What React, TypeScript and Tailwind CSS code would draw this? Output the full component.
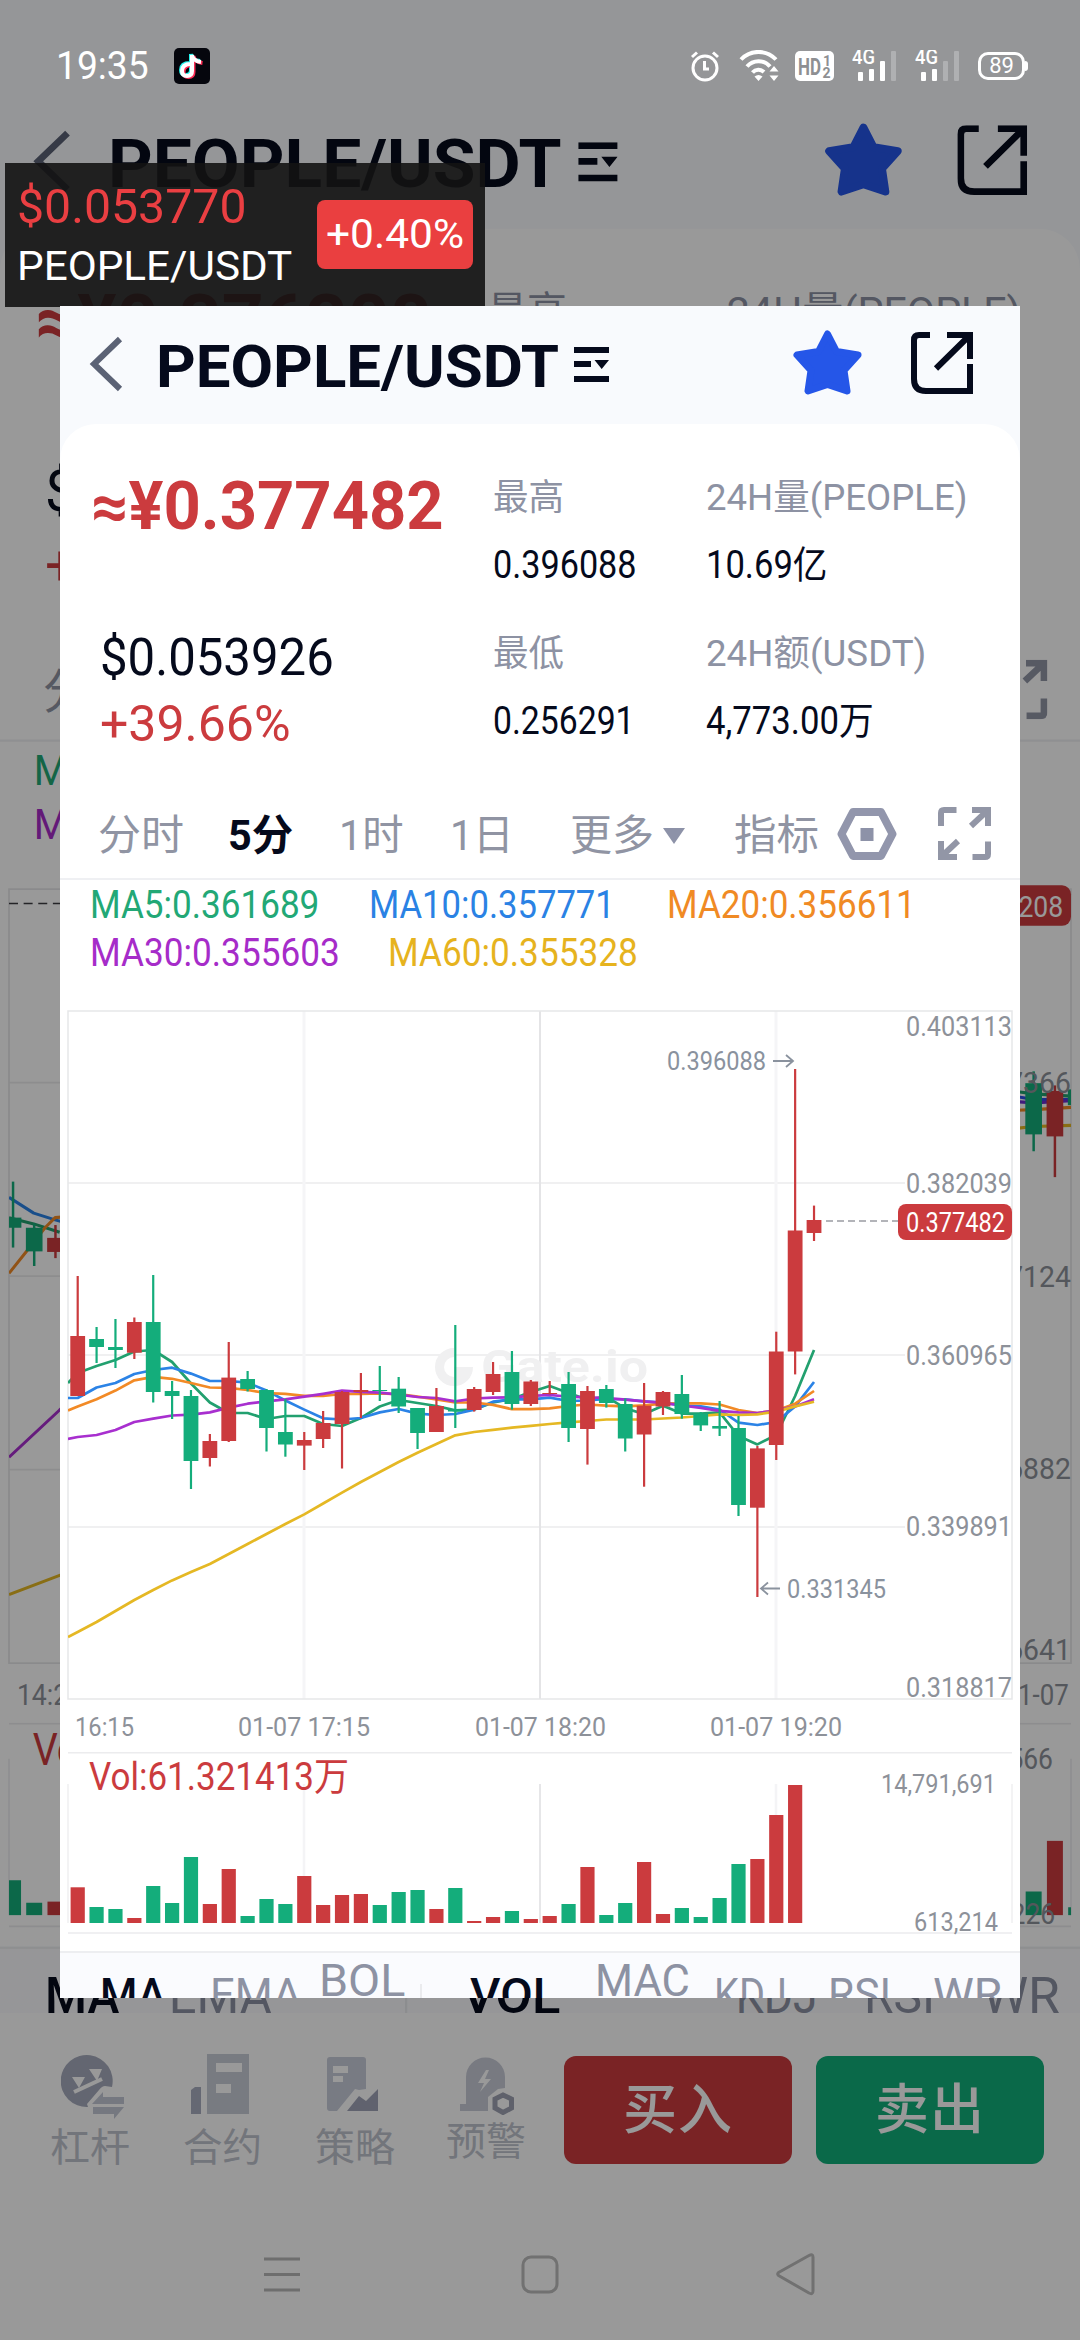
import { useLayoutEffect, useRef, useState } from "react";
import type { ReactNode } from "react";

const RED = "#cb3b3e";
const GREEN = "#14ad7b";
const FONT = "Roboto, 'Noto Sans CJK SC', sans-serif";

/** One line of text, condensed or widened so that it fills `w` pixels. */
function Fit({ w, className = "", children }: { w: number; className?: string; children: ReactNode }) {
  const ref = useRef<HTMLSpanElement>(null);
  const [k, setK] = useState(1);
  useLayoutEffect(() => {
    if (ref.current) setK(w / ref.current.offsetWidth);
  }, [w]);
  return (
    <span className={`block shrink-0 whitespace-nowrap ${className}`} style={{ width: w }}>
      <span ref={ref} className="inline-block origin-left" style={{ transform: `scaleX(${k})` }}>
        {children}
      </span>
    </span>
  );
}

/** Chart label: `cy` is the centre of the digits. */
function Label({ x, cy, w, size = 27, fill = "#8d9199", children }: { x: number; cy: number; w: number; size?: number; fill?: string; children: string }) {
  return (
    <text x={x} y={cy + size * 0.356} fontSize={size} fill={fill} fontFamily={FONT} textLength={w} lengthAdjust="spacingAndGlyphs">
      {children}
    </text>
  );
}

// colour, high, body top, body bottom, low
type Candle = [0 | 1, number, number, number, number];
const R = 0;
const G = 1;

interface ScreenData {
  price: string;
  usd: string;
  pct: string;
  candles: { x: number; c: Candle }[];
  lines: { color: string; pts: string }[];
  axis: string[];
  times: { t: string; x: number; w: number }[];
  vol: { x: number; c: 0 | 1; h: number }[];
  volText: string;
  volMax: string;
  volMin: string;
  last: { t: string; y: number; from: number; badge: number; dash: string };
  marks: boolean;
}

const cx = (i: number) => 17.7 + i * 18.88;

const candles: Candle[] = [
  [R, 265, 325, 385, 385], [G, 316, 328, 336, 352], [G, 308, 336, 339, 357], [R, 306.5, 311, 341.7, 348],
  [G, 264, 311, 381, 391.5], [G, 370, 380, 385, 408], [G, 379, 385, 450, 478], [R, 423, 430, 447, 455.5],
  [R, 331, 366.6, 430, 431], [G, 360, 368, 378, 380.5], [G, 378, 379, 417, 440.5], [G, 388, 421, 433.5, 445.7],
  [R, 421, 429, 434.6, 459], [R, 400, 412, 428, 437], [R, 380, 381, 413, 457.5], [R, 362, 379, 381, 407],
  [G, 355, 379, 380, 390], [G, 366, 377.7, 395.5, 402], [G, 397, 397, 422, 438], [R, 377, 395, 421, 421],
  [G, 314, 399, 400.5, 417], [R, 376, 378, 399, 400.6], [R, 351, 363, 381, 384], [G, 340, 361, 393, 398.6],
  [R, 369, 370.5, 393, 395], [R, 370, 382, 383, 383.5], [G, 361, 373, 417, 431], [R, 375, 380, 418, 453.6],
  [G, 374, 378, 392, 396.6], [G, 387.5, 393, 427.5, 440.5], [R, 372, 394.7, 423.5, 475.7], [R, 380, 381, 395.5, 404],
  [G, 364, 383, 403, 407.7], [G, 401, 402.6, 414.4, 420], [G, 390, 415, 417.6, 425], [G, 405, 417, 494, 505],
  [R, 435, 437.4, 496.7, 586], [R, 320.7, 340.5, 434, 449], [R, 58, 219.5, 340.5, 363.4], [R, 194.6, 209, 222, 230],
];

const series = (edge: number, ys: number[]) => [`8,${edge}`, ...ys.map((y, i) => `${cx(i)},${y}`)].join(" ");

const ma5 = [362, 355, 349, 340.5, 339, 351, 372.5, 391.5, 402, 402, 408, 405, 405, 413, 415, 407, 395.5, 389, 392, 395, 399.4, 398.6, 391.5, 388, 381, 375, 382, 388.7, 385.6, 397.4, 403, 394.7, 402.6, 402.6, 401.4, 425, 433.4, 424, 385, 339];
const ma10 = [387, 376.5, 372, 363, 359, 356.7, 362.6, 370, 370, 371.7, 379.6, 389.5, 398.6, 407.3, 408.5, 407, 401.4, 398, 402.6, 404, 403, 398.6, 390.7, 388.3, 388.3, 386.7, 390, 389.5, 388, 388.3, 390.3, 391.5, 394.7, 395.4, 398.6, 411.7, 414, 411, 395.4, 371];
const ma20 = [395.4, 388.3, 379.6, 369.3, 365.8, 367.8, 372, 376.5, 376.9, 379, 382, 382.8, 384.8, 384.8, 383, 382.8, 382.4, 383.2, 385.6, 388.3, 391.5, 391.5, 393.9, 398.2, 398.2, 397.4, 395, 393.5, 394.7, 395.4, 394.3, 392.7, 392.3, 392.3, 393.5, 399, 402, 399.4, 392.7, 380];
const ma30 = [426, 424, 419, 411, 407.7, 404.5, 403.7, 401.4, 396.6, 392.7, 390.3, 388.3, 385.6, 382.8, 379.6, 380.8, 381.6, 383.6, 386, 387, 390.3, 387.5, 386.7, 386.3, 384.8, 384, 385.6, 386.3, 387, 388.7, 390.3, 391.9, 394.3, 397, 399.8, 401.4, 402, 399.4, 395.4, 388.3];
const ma60 = [621, 611, 600, 589, 579, 569.4, 561, 553, 543, 533, 523, 513, 503.4, 492.5, 481.6, 471, 461, 451, 441.7, 433, 424.3, 421, 418.8, 416.7, 414.8, 413, 411.3, 410, 408.5, 408.5, 408.5, 407.5, 406.5, 405, 403.4, 404, 403.4, 400.6, 395.4, 390.7];
const volumes = [35.7, 16, 14, 5, 37, 20, 66, 19, 54, 7, 24, 19, 47, 18, 28, 29, 18, 31, 33, 14, 35, 2, 6, 12, 4, 7, 19, 56, 8, 20, 61, 9, 15, 6, 25, 59, 64, 108, 138];

const front: ScreenData = {
  price: "≈¥0.377482",
  usd: "$0.053926",
  pct: "+39.66%",
  candles: candles.map((c, i) => ({ x: cx(i), c })),
  lines: [
    { color: "#22a06f", pts: series(372, ma5) },
    { color: "#2b83e6", pts: series(387, ma10) },
    { color: "#f28a26", pts: series(399.4, ma20) },
    { color: "#a82fcf", pts: series(428, ma30) },
    { color: "#e5b824", pts: series(626, ma60) },
  ],
  axis: ["0.403113", "0.382039", "0.360965", "0.339891", "0.318817"],
  times: [
    { t: "16:15", x: 15, w: 59 },
    { t: "01-07 17:15", x: 178, w: 132 },
    { t: "01-07 18:20", x: 415, w: 131 },
    { t: "01-07 19:20", x: 650, w: 132 },
  ],
  vol: volumes.map((h, i) => ({ x: cx(i), c: candles[i][0], h })),
  volText: "Vol:61.321413万",
  volMax: "14,791,691",
  volMin: "613,214",
  last: { t: "0.377482", y: 210, from: 766, badge: 193, dash: "7 4" },
  marks: true,
};

const back: ScreenData = {
  price: "≈¥0.376208",
  usd: "$0.053744",
  pct: "+39.19%",
  candles: [
    { x: 11.6, c: [G, 260, 292, 301, 318.6] },
    { x: 30.4, c: [G, 297, 301, 322, 335] },
    { x: 49.3, c: [R, 298.6, 310, 322.5, 328] },
    { x: 918.8, c: [G, 162, 172.5, 218, 233] },
    { x: 937.7, c: [R, 174.5, 179.4, 219.8, 256] },
    { x: 956.6, c: [G, 178, 178, 192, 192] },
  ],
  lines: [
    { color: "#22a06f", pts: "8,292 30,297.6 53,305" },
    { color: "#2b83e6", pts: "8,274 30,288 49,294 60,297" },
    { color: "#f28a26", pts: "8,341.5 24,321.5 40,301 49,292 60,291" },
    { color: "#a82fcf", pts: "8,505 53,463 70,448" },
    { color: "#e5b824", pts: "8,627 53,610 80,600" },
    { color: "#22a06f", pts: "890,178 919,182 952,184" },
    { color: "#2b4fe6", pts: "890,182 919,187 952,187" },
    { color: "#6b2fcf", pts: "890,188 919,190 952,188" },
    { color: "#f28a26", pts: "890,197 919,196 952,194" },
    { color: "#e5b824", pts: "890,214 919,211 952,210" },
  ],
  axis: ["", "0.367366", "0.357124", "0.346882", "0.336641"],
  times: [
    { t: "14:20", x: 15, w: 59 },
    { t: "01-07", x: 892, w: 58 },
  ],
  vol: [
    { x: 11.6, c: G, h: 31 },
    { x: 30.4, c: G, h: 11 },
    { x: 49.3, c: R, h: 12 },
    { x: 918.8, c: G, h: 21 },
    { x: 937.7, c: R, h: 66 },
    { x: 956.6, c: G, h: 7 },
  ],
  volText: "Vol:45.180226万",
  volMax: "12,438,566",
  volMin: "451,226",
  last: { t: "0.376208", y: 12.8, from: 8, badge: -3.4, dash: "8 5" },
  marks: false,
};

function Header() {
  return (
    <div className="flex h-[118px] items-start">
      <svg className="mt-[30px] ml-[28px] h-14 w-9 shrink-0" viewBox="0 0 36 56" fill="none" stroke="#5b6275" strokeWidth="6">
        <path d="M32 3 L6 28 L32 53" />
      </svg>
      <Fit w={403} className="ml-[32px] h-[121px] text-[59px] leading-[121px] font-bold text-[#050a1c]">
        PEOPLE/USDT
      </Fit>
      <svg className="mt-[41px] ml-[15px] h-[35px] w-[35px] shrink-0" viewBox="0 0 35 35" fill="#050a1c">
        <path d="M0 0H35V6H0ZM0 14H17V20H0ZM0 29H35V35H0ZM20.500 13H35L27.700 22Z" />
      </svg>
      <svg className="mt-[24px] ml-[184px] h-[66px] w-[69px] shrink-0" viewBox="0 0 69 66" fill="#2556e8" stroke="#2556e8" strokeWidth="7" strokeLinejoin="round">
        <path d="M34.500 4 L43.500 21.500 L65 25 L51 40.500 L54 61 L34.500 54.500 L15 61 L18 40.500 L4 25 L25.500 21.500 Z" />
      </svg>
      <svg className="mt-[26px] ml-[49px] h-[62px] w-[62px] shrink-0" viewBox="0 0 62 62" fill="none" stroke="#050a1c" strokeWidth="6">
        <path d="M19 3H8Q3 3 3 8V47Q3 59 15 59H59V32" />
        <path d="M36 3H59V27M59 3L25 36.500" />
      </svg>
    </div>
  );
}

function Stat({ label, lw, value, vw, gap = "" }: { label: string; lw: number; value: string; vw: number; gap?: string }) {
  return (
    <div className={gap}>
      <Fit w={lw} className="text-[36px] leading-[66px] text-[#8d92a3]">{label}</Fit>
      <Fit w={vw} className="text-[38px] leading-[69px] text-[#050a1c]">{value}</Fit>
    </div>
  );
}

function Stats({ d }: { d: ScreenData }) {
  return (
    <div className="grid h-[369px] grid-cols-[433px_213px_1fr] pt-[41px]">
      <div>
        <Fit w={353} className="ml-[31px] text-[66px] leading-[84px] font-bold text-[#cb3b3e]">{d.price}</Fit>
        <Fit w={234} className="mt-[76px] ml-[40px] text-[51px] leading-[66px] text-[#050a1c]">{d.usd}</Fit>
        <Fit w={191} className="ml-[40px] text-[50px] leading-[66px] text-[#cb3b3e]">{d.pct}</Fit>
      </div>
      <div>
        <Stat label="最高" lw={71} value="0.396088" vw={144} />
        <Stat gap="mt-[21px]" label="最低" lw={71} value="0.256291" vw={142} />
      </div>
      <div>
        <Stat label="24H量(PEOPLE)" lw={262} value="10.69亿" vw={121} />
        <Stat gap="mt-[21px]" label="24H额(USDT)" lw={220} value="4,773.00万" vw={168} />
      </div>
    </div>
  );
}

function Periods() {
  return (
    <div className="flex h-[87px] items-center border-b-2 border-[#eff0f3] text-[42px] leading-[86px] text-[#9094a3]">
      <Fit w={86} className="ml-[38px]">分时</Fit>
      <Fit w={65} className="ml-[44px] font-bold text-[#050a1c]">5分</Fit>
      <Fit w={65} className="ml-[46px]">1时</Fit>
      <Fit w={64} className="ml-[46px]">1日</Fit>
      <Fit w={84} className="ml-[56px]">更多</Fit>
      <svg className="ml-[9px] h-4 w-[22px] shrink-0" viewBox="0 0 22 16" fill="#8d92a8">
        <path d="M0 0H22L11 16Z" />
      </svg>
      <Fit w={85} className="ml-[49px]">指标</Fit>
      <svg className="-mt-1 ml-[18px] h-[52px] w-[60px] shrink-0" viewBox="0 0 60 52" fill="none">
        <path d="M16 4H44L55.500 26L44 48H16L4.500 26Z" stroke="#9296ac" strokeWidth="8" strokeLinejoin="round" />
        <rect x="23.500" y="20" width="13" height="13" fill="#8d92a8" />
      </svg>
      <svg className="-mt-1 ml-[41px] h-[53px] w-[53px] shrink-0" viewBox="0 0 53 53" fill="none" stroke="#9296a6" strokeWidth="6">
        <path d="M18.500 3H6Q3 3 3 6V19M34.500 50H47Q50 50 50 47V34.500M34 3H50V19M49 4L33 19M3 34V50H19M4 49L20 34" />
      </svg>
    </div>
  );
}

function Averages() {
  return (
    <div className="h-24 pl-[30px] text-[38px] leading-12">
      <div className="flex">
        <Fit w={229} className="text-[#22a876]">MA5:0.361689</Fit>
        <Fit w={246} className="ml-[50px] text-[#2a82e4]">MA10:0.357771</Fit>
        <Fit w={249} className="ml-[52px] text-[#f08a24]">MA20:0.356611</Fit>
      </div>
      <div className="flex">
        <Fit w={250} className="text-[#a62cc9]">MA30:0.355603</Fit>
        <Fit w={250} className="ml-[48px] text-[#e6b31e]">MA60:0.355328</Fit>
      </div>
    </div>
  );
}

function PriceChart({ d, id }: { d: ScreenData; id: string }) {
  const axisY = [15, 172, 344, 515, 676];
  return (
    <svg className="block h-[775px] w-[960px]" viewBox="0 -34 960 775">
      <clipPath id={id}>
        <rect x="8" y="0" width="944" height="688" />
      </clipPath>
      <g stroke="#ebebed" strokeWidth="1.500" fill="none">
        <path d="M8 172H845M8 344H845M8 516H845" />
        <path d="M244 0V688M716 0V688" stroke="#f5f5f7" strokeWidth="3" />
        <path d="M480 0V688" stroke="#e4e4e6" strokeWidth="2" />
        <rect x="8" y="0" width="944" height="688" stroke="#e6e7e9" />
      </g>
      {d.marks && (
        <g>
          <path d="M394 341.500A14.500 14.500 0 1 0 408.500 356" fill="none" stroke="#f0f0f1" strokeWidth="9" />
          <path d="M394 356H404V366H394Z" fill="#f0f0f1" />
          <text x="421" y="371" fontSize="45" fontWeight="700" fill="#f0f0f1" fontFamily={FONT} textLength="167" lengthAdjust="spacingAndGlyphs">
            Gate.io
          </text>
        </g>
      )}
      <g clipPath={`url(#${id})`}>
        {d.lines.map((l, i) => (
          <polyline key={i} points={l.pts} fill="none" stroke={l.color} strokeWidth="2.700" strokeLinejoin="round" />
        ))}
        {d.candles.map(({ x, c }, i) => (
          <g key={i} fill={c[0] ? GREEN : RED}>
            <rect x={x - 1.1} y={c[1]} width="2.200" height={c[4] - c[1]} />
            <rect x={x - 7.4} y={c[2]} width="14.800" height={c[3] - c[2]} />
          </g>
        ))}
      </g>
      {d.axis.map((t, i) => t && <Label key={t} x={846} cy={axisY[i]} w={106}>{t}</Label>)}
      {d.marks && (
        <g>
          <Label x={607} cy={50} w={99} size={26} fill="#8a929e">0.396088</Label>
          <Label x={727} cy={577.600} w={99} size={26} fill="#8a929e">0.331345</Label>
          <path d="M713 50H733M726 44L733 50L726 56M720 577.500H701M708 571.500L701 577.500L708 583.500" fill="none" stroke="#8a929e" strokeWidth="1.800" />
        </g>
      )}
      <path d={`M${d.last.from} ${d.last.y}H840`} stroke={d.marks ? "#9a9ca2" : "#3c3d42"} strokeWidth="1.500" strokeDasharray={d.last.dash} />
      <rect x="838" y={d.last.badge} width="114" height="36" rx="8" fill={RED} />
      <Label x={846} cy={d.last.badge + 18.500} w={99} fill="#ffffff">{d.last.t}</Label>
      {d.times.map((t) => (
        <Label key={t.x} x={t.x} cy={716} w={t.w} size={26}>{t.t}</Label>
      ))}
    </svg>
  );
}

function VolumeChart({ d, id }: { d: ScreenData; id: string }) {
  return (
    <svg className="block h-[199px] w-[960px]" viewBox="0 0 960 199">
      <clipPath id={id}>
        <rect x="8" y="0" width="944" height="199" />
      </clipPath>
      <path d="M8 0.800H952M8 181H952" stroke="#ececee" strokeWidth="1.500" />
      <path d="M8 32V171M952 32V171" stroke="#efeff1" strokeWidth="1.500" />
      <path d="M480 32V171" stroke="#e4e4e6" strokeWidth="1.800" />
      <path d="M244 32V171M716 32V171" stroke="#f4f4f6" strokeWidth="2.500" />
      <g clipPath={`url(#${id})`}>
        {d.vol.map((v, i) => (
          <rect key={i} x={v.x - 7.100} y={171 - v.h} width="14.200" height={v.h} fill={v.c ? GREEN : RED} />
        ))}
      </g>
      <Label x={29} cy={24} w={260} size={39} fill={RED}>{d.volText}</Label>
      <Label x={821} cy={32} w={115} size={26}>{d.volMax}</Label>
      <Label x={854} cy={170} w={84} size={26}>{d.volMin}</Label>
    </svg>
  );
}

function Indicators() {
  return (
    <div className="flex h-[70px] border-t-2 border-[#edeef1] bg-[#fafbfe] pt-4 text-[44px] leading-[52px] text-[#8d92a3]">
      <Fit w={66} className="ml-[40px] text-[#050a1c] font-medium">MA</Fit>
      <Fit w={92} className="ml-[44px]">EMA</Fit>
      <Fit w={86} className="-mt-[14px] ml-[17px]">BOL</Fit>
      <span className="mt-[15px] ml-[15px] h-9 w-0.5 shrink-0 bg-[#eaebee]" />
      <Fit w={88} className="ml-[48px] text-[#050a1c] font-medium">VOL</Fit>
      <Fit w={95} className="-mt-[14px] ml-[37px]">MAC</Fit>
      <Fit w={73} className="ml-[24px]">KDJ</Fit>
      <Fit w={63} className="ml-[41px]">RSI</Fit>
      <Fit w={69} className="ml-[42px]">WR</Fit>
    </div>
  );
}

function Market({ d, id }: { d: ScreenData; id: string }) {
  return (
    <div className="w-[960px] bg-[#f8fafd]">
      <Header />
      <div className="rounded-t-[36px] bg-white">
        <Stats d={d} />
        <Periods />
        <div className="h-px" />
        <Averages />
        <PriceChart d={d} id={`${id}-price`} />
        <VolumeChart d={d} id={`${id}-vol`} />
        <Indicators />
      </div>
    </div>
  );
}

function LeverageIcon() {
  return (
    <svg className="h-[68px] w-[64px]" viewBox="0 0 64 68">
      <path d="M27 53A26 26 0 1 1 51 33L44 32Q41 32 38 36L26 50Z" fill="#a6abbc" />
      <path d="M13 38L41 25" stroke="#fff" strokeWidth="4" />
      <path d="M11 23H24L18 34ZM28 15H41L36 27Z" fill="#fff" />
      <path d="M31 50L42 38V43H63V50ZM32 53H63L53 65V60H32Z" fill="#c4c9d6" />
    </svg>
  );
}
function ContractIcon() {
  return (
    <svg className="h-[60px] w-[60px]" viewBox="0 0 60 60">
      <path d="M1 60V36L5 33H11V60Z" fill="#a9aec0" />
      <path d="M17 0H59V60H17ZM26 9V18H52V9ZM26 30V39H41V30Z" fill="#c8cdd8" fillRule="evenodd" />
    </svg>
  );
}
function StrategyIcon() {
  return (
    <svg className="h-[56px] w-[52px]" viewBox="0 0 52 56">
      <path d="M3 0H36Q39 0 39 3V32L32 33L28 32L10 54H3Q0 54 0 51V3Q0 0 3 0Z" fill="#c8cddb" />
      <path d="M6 9H21V16H6ZM6 19H16V25H6Z" fill="#fff" />
      <path d="M20 54L32 39L39 44L51 32V54Z" fill="#a0a4b8" />
    </svg>
  );
}
function AlertIcon() {
  return (
    <svg className="h-[58px] w-[56px]" viewBox="0 0 56 58">
      <path d="M0 54V47H6V20A19 19 0 0 1 45 20V31L38 32L28 40V54Z" fill="#c8ccd8" />
      <path d="M26 13L18 26H24L20 35L31 22H25L29 13Z" fill="#fff" />
      <path d="M43 38L51.500 42V51L43 55.500L35 51V42Z" fill="none" stroke="#9ea2b2" strokeWidth="5" />
    </svg>
  );
}

function BottomBar() {
  return (
    <div className="flex h-[187px] shrink-0 text-[39px] leading-[50px] text-[#bfc3cd]">
      <div className="ml-[50px] flex w-20 flex-col items-center pt-[41px]">
        <div className="ml-[6px] h-[69px]"><LeverageIcon /></div>
        <Fit w={80}>杠杆</Fit>
      </div>
      <div className="ml-[52px] flex w-20 flex-col items-center pt-[41px]">
        <div className="h-[69px] pr-1"><ContractIcon /></div>
        <Fit w={79}>合约</Fit>
      </div>
      <div className="ml-[53px] flex w-20 flex-col items-center pt-[44px]">
        <div className="h-[66px] pr-1"><StrategyIcon /></div>
        <Fit w={80}>策略</Fit>
      </div>
      <div className="ml-[51px] flex w-20 flex-col items-center pt-[44px]">
        <div className="h-[60px] pl-1"><AlertIcon /></div>
        <Fit w={80}>预警</Fit>
      </div>
      <button className="mt-[43px] ml-[38px] h-[108px] w-[228px] rounded-xl bg-[#cb3b3e] text-[54px] leading-[110px] font-medium tracking-[1px] text-white">买入</button>
      <button className="mt-[43px] ml-6 h-[108px] w-[228px] rounded-xl bg-[#11af7b] text-[54px] leading-[110px] font-medium tracking-[1px] text-white">卖出</button>
    </div>
  );
}

function NavBar() {
  return (
    <div className="flex h-[140px] shrink-0 pt-[52px]">
      <svg className="ml-[262px] h-11 w-10" viewBox="0 0 40 44" fill="none" stroke="#b8b8b8" strokeWidth="3">
        <path d="M2 7H38M2 22.500H38M2 38H38" />
      </svg>
      <svg className="ml-[218px] h-11 w-10" viewBox="0 0 40 44" fill="none" stroke="#bcbcbc" strokeWidth="3">
        <rect x="3" y="5" width="34" height="35" rx="8" />
      </svg>
      <svg className="ml-[215px] h-11 w-10" viewBox="0 0 40 44" fill="none" stroke="#bcbcbc" strokeWidth="3" strokeLinejoin="round">
        <path d="M3.500 20.500Q2 22 3.500 23.500L34 41Q38 43 38 39V5Q38 1.500 34 3.500Z" />
      </svg>
    </div>
  );
}

function Signal({ bars }: { bars: number }) {
  return (
    <svg className="h-[32px] w-[46px] shrink-0" viewBox="0 0 46 32" fill="#fff">
      <text x="0" y="14" fontSize="20" fontWeight="500" fontFamily={FONT} textLength="23" lengthAdjust="spacingAndGlyphs">4G</text>
      <rect x="6" y="22" width="5" height="9" rx="1" />
      <rect x="17" y="19" width="5" height="12" rx="1" />
      <rect x="28" y="11" width="5" height="20" rx="1" opacity={bars > 2 ? 1 : 0.25} />
      <rect x="39" y="1" width="5" height="30" rx="1" opacity="0.25" />
    </svg>
  );
}

function StatusBar() {
  return (
    <div className="absolute inset-x-0 top-0 flex h-[132px] items-center text-white">
      <Fit w={93} className="ml-[56px] text-[38px] leading-[132px]">19:35</Fit>
      <svg className="ml-[25px] h-9 w-9 shrink-0" viewBox="0 0 36 36" fill="none" strokeWidth="4">
        <rect width="36" height="36" rx="5" fill="#05060d" />
        <path d="M17 16Q8 16 8 23Q8 28 13 28Q18 28 18 23V7Q19 13 27 14" stroke="#25f4ee" transform="translate(-1 -1)" />
        <path d="M17 16Q8 16 8 23Q8 28 13 28Q18 28 18 23V7Q19 13 27 14" stroke="#fe2c55" transform="translate(1.500 1)" />
        <path d="M17 16Q8 16 8 23Q8 28 13 28Q18 28 18 23V7Q19 13 27 14" stroke="#fff" />
      </svg>
      <svg className="ml-[479px] h-8 w-8 shrink-0" viewBox="0 0 32 32" fill="none" stroke="#fff" strokeWidth="3">
        <circle cx="16" cy="18" r="12" />
        <path d="M15.500 11V19H20M3 7L8 2.500M29 7L24 2.500" />
      </svg>
      <svg className="ml-[18px] h-8 w-[42px] shrink-0" viewBox="0 0 42 32" fill="none" stroke="#fff" strokeWidth="4">
        <path d="M2 9.500A24 24 0 0 1 37 9.500M8 16.500A15 15 0 0 1 31 16.500M13.500 22.500A8 8 0 0 1 25 22" />
        <path d="M19.500 31L15.500 26.500Q19.500 23.500 23.500 26.500ZM35 16L39.500 21.500H30.500ZM35 31L39.500 25.500H30.500Z" fill="#fff" stroke="none" />
      </svg>
      <svg className="ml-[14px] h-8 w-[39px] shrink-0" viewBox="0 0 39 32" fontFamily={FONT} fontWeight="700" fill="#8e8f92">
        <rect y="1" width="39" height="30" rx="5" fill="#fff" />
        <text x="3" y="25" fontSize="23" textLength="23" lengthAdjust="spacingAndGlyphs">HD</text>
        <text x="28" y="16" fontSize="14">1</text>
        <text x="27.500" y="28" fontSize="14">2</text>
      </svg>
      <div className="ml-[18px]"><Signal bars={3} /></div>
      <div className="ml-[17px]"><Signal bars={2} /></div>
      <div className="ml-[17px] flex h-7 w-[47px] items-center justify-center rounded-[10px] border-[3px] border-white text-[22px] leading-none">89</div>
      <div className="h-[10px] w-[3px] rounded-r bg-white" />
    </div>
  );
}

function Ticker() {
  return (
    <div className="absolute top-[163px] left-[5px] flex h-[144px] w-[480px] bg-[#131313]/90">
      <div className="w-[312px] pl-3">
        <Fit w={229} className="pt-[11px] text-[48px] leading-[66px] text-[#ea3f42]">$0.053770</Fit>
        <Fit w={275} className="text-[41px] leading-[53px] text-white">PEOPLE/USDT</Fit>
      </div>
      <div className="mt-[37px] flex h-[69px] w-[156px] items-center justify-center rounded-lg bg-[#ea3f40]">
        <Fit w={138} className="text-[40px] leading-[71px] text-white">+0.40%</Fit>
      </div>
    </div>
  );
}

export default function App() {
  return (
    <div className="relative h-[2340px] w-[1080px] overflow-hidden bg-white font-[Roboto,'Noto_Sans_CJK_SC',sans-serif]">
      <div className="flex h-full flex-col">
        <div className="h-[95.5px] shrink-0 bg-[#f8fafd]" />
        <div className="h-[1917.5px] shrink-0 overflow-hidden">
          <div className="w-[960px] origin-top-left scale-[1.125]">
            <Market d={back} id="back" />
          </div>
        </div>
        <BottomBar />
        <NavBar />
      </div>
      <div className="absolute inset-0 bg-black/40" />
      <StatusBar />
      <Ticker />
      <div className="absolute top-[306px] left-[60px] h-[1692px] w-[960px] overflow-hidden">
        <Market d={front} id="front" />
      </div>
    </div>
  );
}
